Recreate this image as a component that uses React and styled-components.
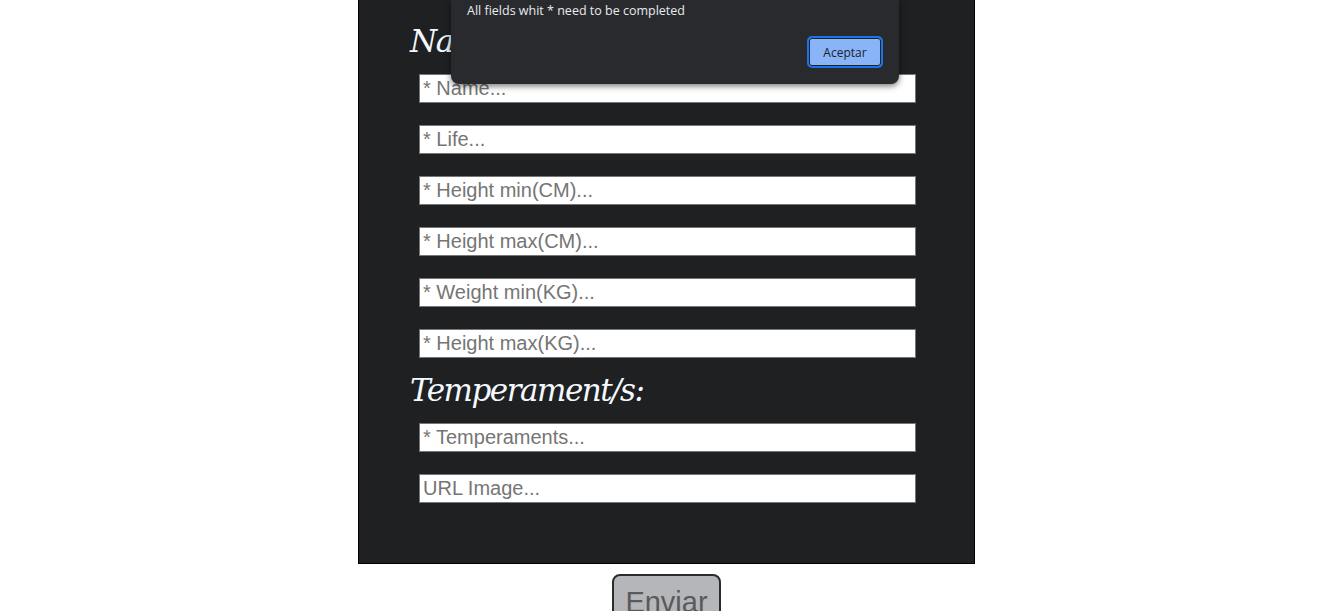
import React from 'react';
import styled, { createGlobalStyle } from 'styled-components';

const GlobalStyle = createGlobalStyle`
  html, body {
    margin: 0;
    padding: 0;
    background: #ffffff;
    overflow: hidden;
  }
  body {
    font-family: "Liberation Sans", Arial, sans-serif;
  }
`;

const Page = styled.div`
  position: relative;
  width: 1325px;
  height: 611px;
  overflow: hidden;
`;

const Column = styled.div`
  width: 617px;
  margin-left: 358px;
  display: flex;
  flex-direction: column;
  align-items: center;
`;

const Panel = styled.form`
  box-sizing: border-box;
  width: 617px;
  display: flex;
  flex-direction: column;
  align-items: flex-start;
  padding: 21px 58px 60px 51px;
  background: #1f2022;
  border: 1px solid #000;
  border-top: none;
`;

const Heading = styled.h2`
  margin: ${props => props.first ? '0' : '12px 0 0'};
  height: 40px;
  line-height: 40px;
  font-family: "DejaVu Serif", "Liberation Serif", serif;
  font-style: italic;
  font-weight: normal;
  font-size: 31px;
  color: #f4f9ff;
  letter-spacing: -1.5px;
`;

const Field = styled.input`
  box-sizing: border-box;
  width: 497px;
  height: 29px;
  margin: ${props => props.afterHeading ? '13px' : '22px'} 0 0 9px;
  padding: 0 3px;
  border: 1px solid #767676;
  border-radius: 0;
  background: #fff;
  font-family: "Liberation Sans", Arial, sans-serif;
  font-size: 20px;
  outline: none;

  &::placeholder {
    color: #757575;
  }
`;

const SubmitButton = styled.button`
  box-sizing: border-box;
  margin-top: 10px;
  width: 109px;
  height: 50px;
  padding: 6px 0 0;
  background: #b4b6ba;
  border: 2px solid #2b2b2b;
  border-radius: 8px;
  font-family: "Liberation Sans", Arial, sans-serif;
  font-size: 29px;
  color: #5a5a5a;
  line-height: 36px;
`;

const Dialog = styled.div`
  position: absolute;
  top: 0;
  left: 451px;
  box-sizing: border-box;
  width: 448px;
  height: 84px;
  padding: 3px 16px 0;
  background: #292a2d;
  border-radius: 0 0 8px 8px;
  box-shadow: 0 2px 6px rgba(0, 0, 0, 0.55);
  display: flex;
  flex-direction: column;
  font-family: "Open Sans", "Noto Sans", sans-serif;
`;

const DialogText = styled.p`
  margin: 0;
  font-size: 12.5px;
  line-height: 16px;
  color: #e8eaed;
`;

const DialogActions = styled.div`
  display: flex;
  justify-content: flex-end;
  margin-top: 18px;
`;

const AcceptButton = styled.button`
  box-sizing: border-box;
  width: 76px;
  height: 32px;
  margin-top: -1px;
  background: #8ab4f8;
  border: 2px solid #1a73e8;
  box-shadow: inset 0 0 0 1px #202124;
  border-radius: 5px;
  font-family: "Open Sans", "Noto Sans", sans-serif;
  font-size: 12px;
  color: #202124;
  padding: 0;
`;

const fields = [
  '* Name...',
  '* Life...',
  '* Height min(CM)...',
  '* Height max(CM)...',
  '* Weight min(KG)...',
  '* Height max(KG)...',
];

export default function App() {
  return (
    <Page>
      <GlobalStyle />
      <Column>
        <Panel onSubmit={e => e.preventDefault()}>
          <Heading first>Name:</Heading>
          {fields.map((f, i) => (
            <Field key={f} type="text" placeholder={f} afterHeading={i === 0} />
          ))}
          <Heading>Temperament/s:</Heading>
          <Field type="text" placeholder="* Temperaments..." afterHeading />
          <Field type="text" placeholder="URL Image..." />
        </Panel>
        <SubmitButton type="submit">Enviar</SubmitButton>
      </Column>
      <Dialog>
        <DialogText>All fields whit * need to be completed</DialogText>
        <DialogActions>
          <AcceptButton>Aceptar</AcceptButton>
        </DialogActions>
      </Dialog>
    </Page>
  );
}
